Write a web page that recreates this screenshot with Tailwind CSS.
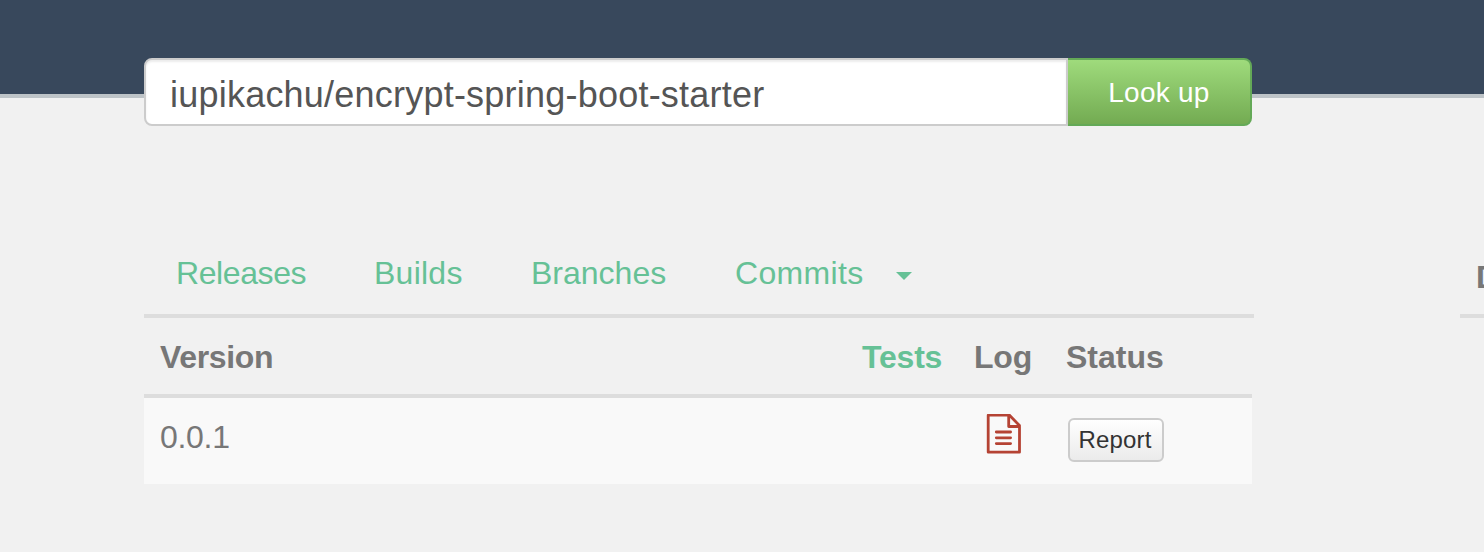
<!DOCTYPE html>
<html lang="en">
<head>
<meta charset="utf-8">
<title>Look up</title>
<script src="https://cdn.jsdelivr.net/npm/@tailwindcss/browser@4"></script>
</head>
<body class="h-[552px] overflow-hidden bg-[#f1f1f1] font-['Liberation_Sans',Arial,sans-serif] text-[32px] leading-10 text-[#777]">
<header class="h-[98px] border-b-4 border-[#bdc3c7] bg-[#38485c]"></header>
<main class="relative -mt-10 ml-36">
  <form class="flex h-[68px] w-[1108px]">
    <input type="text" value="iupikachu/encrypt-spring-boot-starter" aria-label="Repository" class="h-full w-[924px] rounded-l-lg border-2 border-[#ccc] bg-white pt-1.5 pl-6 text-[36px] tracking-[0.22px] text-[#555] shadow-[inset_0_2px_2px_rgba(0,0,0,0.075)] outline-none">
    <button type="button" class="h-full w-[184px] rounded-r-lg border-2 border-l-0 border-[#64a957] bg-linear-to-b from-[#9fdb7c] to-[#73ab52] pt-0.5 text-[28px] tracking-[0.25px] text-white">Look up</button>
  </form>
  <div class="mt-[106px] flex w-[1340px] justify-between">
    <section>
      <nav class="flex h-[86px] w-[1110px] border-b-4 border-[#ddd] pt-[21px] pl-8 text-[#66c196]">
        <a class="w-[198px] tracking-[-0.4px]">Releases</a>
        <a class="w-[157px] tracking-[0.25px]">Builds</a>
        <a class="w-[204px]">Branches</a>
        <a class="w-[161px] tracking-[0.35px]">Commits</a>
        <svg class="mt-[19px] h-2 w-4" viewBox="0 0 16 8" fill="currentColor"><path d="M0 0h16L8 8z"/></svg>
      </nav>
      <div class="w-[1108px]">
        <div class="flex h-20 border-b-4 border-[#ddd] pt-[19px] pl-4 font-bold">
          <span class="w-[702px] tracking-[-0.35px]">Version</span>
          <a class="w-[112px] tracking-[-0.2px] text-[#66c196]">Tests</a>
          <span class="w-[92px] tracking-[-0.2px]">Log</span>
          <span>Status</span>
        </div>
        <div class="flex h-[86px] bg-[#f9f9f9] pl-4">
          <span class="w-[826px] pt-[19px] tracking-[-0.3px]">0.0.1</span>
          <svg class="mt-4 h-10 w-9" viewBox="0 0 36 40" fill="none" stroke="#b54334" stroke-width="2.8" stroke-linejoin="round" stroke-linecap="round"><path d="M2.2 1.2H23.5L33.5 11.5V38.2H2.2zM22.7 1.5V12.5H33.5"/><path d="M10.3 18H24.6M10.3 23.8H24.6M10.3 29.6H24.6"/></svg>
          <button type="button" class="mt-5 ml-[46px] h-11 w-24 rounded-md border-2 border-[#ccc] bg-linear-to-b from-white to-[#ebebeb] pr-0.5 text-[24px] tracking-[0.15px] text-[#333]">Report</button>
        </div>
      </div>
    </section>
    <aside class="h-[86px] w-6 overflow-hidden border-b-4 border-[#ddd] pt-[25px] pl-4 font-bold">D</aside>
  </div>
</main>
</body>
</html>
